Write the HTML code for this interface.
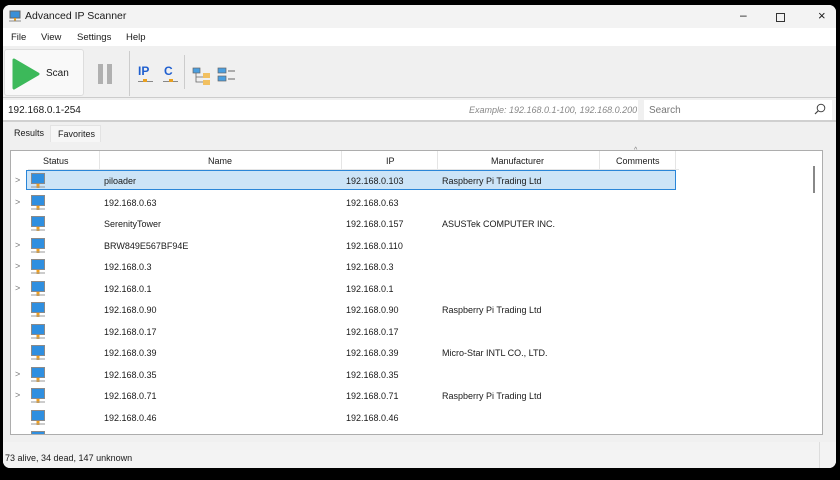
<!DOCTYPE html>
<html><head><meta charset="utf-8"><style>
*{margin:0;padding:0;box-sizing:border-box}
body{width:840px;height:480px;background:#000;position:relative;overflow:hidden;font-family:"Liberation Sans",sans-serif;font-size:9.5px;color:#1a1a1a}
.a{position:absolute}
#win{left:3px;top:5px;width:833px;height:463px;background:#f0f0f0;border-radius:7px;overflow:hidden}
.t{position:absolute;white-space:nowrap}
.row{position:absolute;left:0;width:800px;height:21.5px}
.ic{position:absolute;left:20px;top:2px;width:16px;height:17px}
.chev{position:absolute;left:5px;top:5px;color:#777;font-size:9px}
</style></head><body>
<div id="win" class="a">
 <div class="a" style="left:0;top:0;width:833px;height:23px;background:#f3f3f3"></div>
 <svg class="a" style="left:6px;top:5px" width="13" height="13"><rect x="1" y="1" width="10" height="7" fill="#3a8fd8" stroke="#666"/><rect x="5" y="8" width="2" height="3" fill="#e8a020"/><line x1="0" y1="11" x2="12" y2="11" stroke="#888"/></svg>
 <div class="t" style="left:22px;top:5px;font-size:10.5px">Advanced IP Scanner</div>
 <div class="t" style="left:737px;top:3px;font-size:12px">&#8211;</div>
 <div class="a" style="left:773px;top:8px;width:9px;height:9px;border:1px solid #333"></div>
 <div class="t" style="left:815px;top:3px;font-size:13px">&#215;</div>
 <div class="a" style="left:0;top:23px;width:833px;height:18px;background:#fff"></div>
 <div class="t" style="left:8px;top:27px">File</div>
 <div class="t" style="left:38px;top:27px">View</div>
 <div class="t" style="left:74px;top:27px">Settings</div>
 <div class="t" style="left:123px;top:27px">Help</div>
 <div class="a" style="left:1px;top:44px;width:80px;height:47px;background:#f9f9f9;border:1px solid #ddd;border-radius:3px"></div>
 <svg class="a" style="left:8px;top:52px" width="30" height="34"><path d="M3 3 L27 17 L3 31 Z" fill="#3cb95a" stroke="#3cb95a" stroke-width="3" stroke-linejoin="round"/></svg>
 <div class="t" style="left:43px;top:63px;font-size:10px">Scan</div>
 <div class="a" style="left:95px;top:59px;width:5px;height:20px;background:#b0b0b0"></div>
 <div class="a" style="left:104px;top:59px;width:5px;height:20px;background:#b0b0b0"></div>
 <div class="a" style="left:126px;top:46px;width:1px;height:45px;background:#ccc"></div>
 <div class="t" style="left:135px;top:59px;font-size:12px;font-weight:bold;color:#1f5fcf">IP</div>
 <div class="a" style="left:135px;top:76px;width:15px;height:1px;background:#888"></div><div class="a" style="left:140px;top:74px;width:4px;height:3px;background:#e8a020"></div>
 <div class="t" style="left:161px;top:59px;font-size:12px;font-weight:bold;color:#1f5fcf">C</div>
 <div class="a" style="left:160px;top:76px;width:15px;height:1px;background:#888"></div><div class="a" style="left:166px;top:74px;width:4px;height:3px;background:#e8a020"></div>
 <div class="a" style="left:181px;top:50px;width:1px;height:34px;background:#ccc"></div>
 <svg class="a" style="left:189px;top:62px" width="20" height="20"><rect x="1" y="1" width="7" height="5" fill="#4a9fe0" stroke="#666" stroke-width=".7"/><path d="M4 6 V15 H11 M4 10 H11" stroke="#666" fill="none" stroke-width=".8"/><rect x="11" y="6" width="7" height="5" fill="#f2c060"/><rect x="11" y="13" width="7" height="5" fill="#f2c060"/></svg>
 <svg class="a" style="left:214px;top:62px" width="20" height="20"><rect x="1" y="1" width="8" height="5" fill="#4a9fe0" stroke="#666" stroke-width=".7"/><rect x="1" y="9" width="8" height="5" fill="#4a9fe0" stroke="#666" stroke-width=".7"/><path d="M11 4 H18 M11 12 H18" stroke="#666"/></svg>
 <div class="a" style="left:0;top:92px;width:833px;height:1px;background:#ccc"></div>
 <div class="a" style="left:0;top:95px;width:635px;height:20px;background:#fff"></div>
 <div class="t" style="left:5px;top:100px;font-size:10px">192.168.0.1-254</div>
 <div class="t" style="left:466px;top:100px;font-size:9px;font-style:italic;color:#888">Example: 192.168.0.1-100, 192.168.0.200</div>
 <div class="a" style="left:641px;top:95px;width:188px;height:20px;background:#fff"></div>
 <div class="t" style="left:646px;top:100px;font-size:10px;color:#777">Search</div>
 <svg class="a" style="left:811px;top:98px" width="12" height="12"><circle cx="7" cy="5" r="3.8" fill="none" stroke="#444"/><line x1="4.3" y1="7.7" x2="1" y2="11" stroke="#444" stroke-width="1.2"/></svg>
 <div class="a" style="left:0;top:115px;width:833px;height:2px;background:#d0d0d0"></div>
 <div class="a" style="left:47px;top:120px;width:51px;height:17px;background:#f6f6f6;border:1px solid #e3e3e3;border-bottom:none"></div>
 <div class="t" style="left:11px;top:123px;font-size:9px">Results</div>
 <div class="t" style="left:55px;top:124px;font-size:9px">Favorites</div>
 <div class="a" style="left:7px;top:145px;width:813px;height:285px;background:#fff;border:1px solid #adadad"></div>
 <div class="a" style="left:25px;top:146px;width:651px;height:19px;border-bottom:1px solid #e5e5e5"></div>
 <div class="a" style="left:96px;top:146px;width:1px;height:19px;background:#e5e5e5"></div>
 <div class="a" style="left:338px;top:146px;width:1px;height:19px;background:#e5e5e5"></div>
 <div class="a" style="left:434px;top:146px;width:1px;height:19px;background:#e5e5e5"></div>
 <div class="a" style="left:596px;top:146px;width:1px;height:19px;background:#e5e5e5"></div>
 <div class="a" style="left:672px;top:146px;width:1px;height:19px;background:#e5e5e5"></div>
 <div class="t" style="left:40px;top:151px;font-size:9px">Status</div>
 <div class="t" style="left:205px;top:151px;font-size:9px">Name</div>
 <div class="t" style="left:383px;top:151px;font-size:9px">IP</div>
 <div class="t" style="left:488px;top:151px;font-size:9px">Manufacturer</div>
 <div class="t" style="left:613px;top:151px;font-size:9px">Comments</div>
 <div class="t" style="left:631px;top:142px;font-size:7px;color:#777">^</div>
 <div class="a" style="left:810px;top:161px;width:2px;height:27px;background:#888"></div>
 <div class="a" style="left:23px;top:165px;width:650px;height:20px;background:#cce4f7;border:1px solid #2a86d8"></div>
 <div class="a" style="left:7px;top:165px;width:800px;height:264px;overflow:hidden">
  <div id="rows"></div>
 </div>
 <div class="a" style="left:0;top:437px;width:833px;height:26px;background:#f3f3f3"></div>
 <div class="t" style="left:2px;top:448px;font-size:9px">73 alive, 34 dead, 147 unknown</div>
 <div class="a" style="left:816px;top:437px;width:1px;height:26px;background:#ddd"></div>
</div>
<script>
var d=[[1,"piloader","192.168.0.103","Raspberry Pi Trading Ltd"],[1,"192.168.0.63","192.168.0.63",""],[0,"SerenityTower","192.168.0.157","ASUSTek COMPUTER INC."],[1,"BRW849E567BF94E","192.168.0.110",""],[1,"192.168.0.3","192.168.0.3",""],[1,"192.168.0.1","192.168.0.1",""],[0,"192.168.0.90","192.168.0.90","Raspberry Pi Trading Ltd"],[0,"192.168.0.17","192.168.0.17",""],[0,"192.168.0.39","192.168.0.39","Micro-Star INTL CO., LTD."],[1,"192.168.0.35","192.168.0.35",""],[1,"192.168.0.71","192.168.0.71","Raspberry Pi Trading Ltd"],[0,"192.168.0.46","192.168.0.46",""],[0,"","",""]];
var h="";
d.forEach(function(r,i){
 h+='<div class="row" style="top:'+(i*21.5)+'px">'+(r[0]?'<div class="chev">&gt;</div>':'')+
 '<svg class="ic" width="16" height="17"><rect x="1.5" y="1.5" width="13" height="10" fill="#2f8fe0" stroke="#8a8a8a"/><rect x="6.5" y="12" width="3" height="4" fill="#f0a020"/><line x1="1" y1="15" x2="15" y2="15" stroke="#999"/></svg>'+
 '<div class="t" style="left:94px;top:6px;font-size:9px">'+r[1]+'</div>'+
 '<div class="t" style="left:336px;top:6px;font-size:9px">'+r[2]+'</div>'+
 '<div class="t" style="left:432px;top:6px;font-size:9px">'+r[3]+'</div></div>';
});
document.getElementById("rows").innerHTML=h;
</script>
</body></html>
